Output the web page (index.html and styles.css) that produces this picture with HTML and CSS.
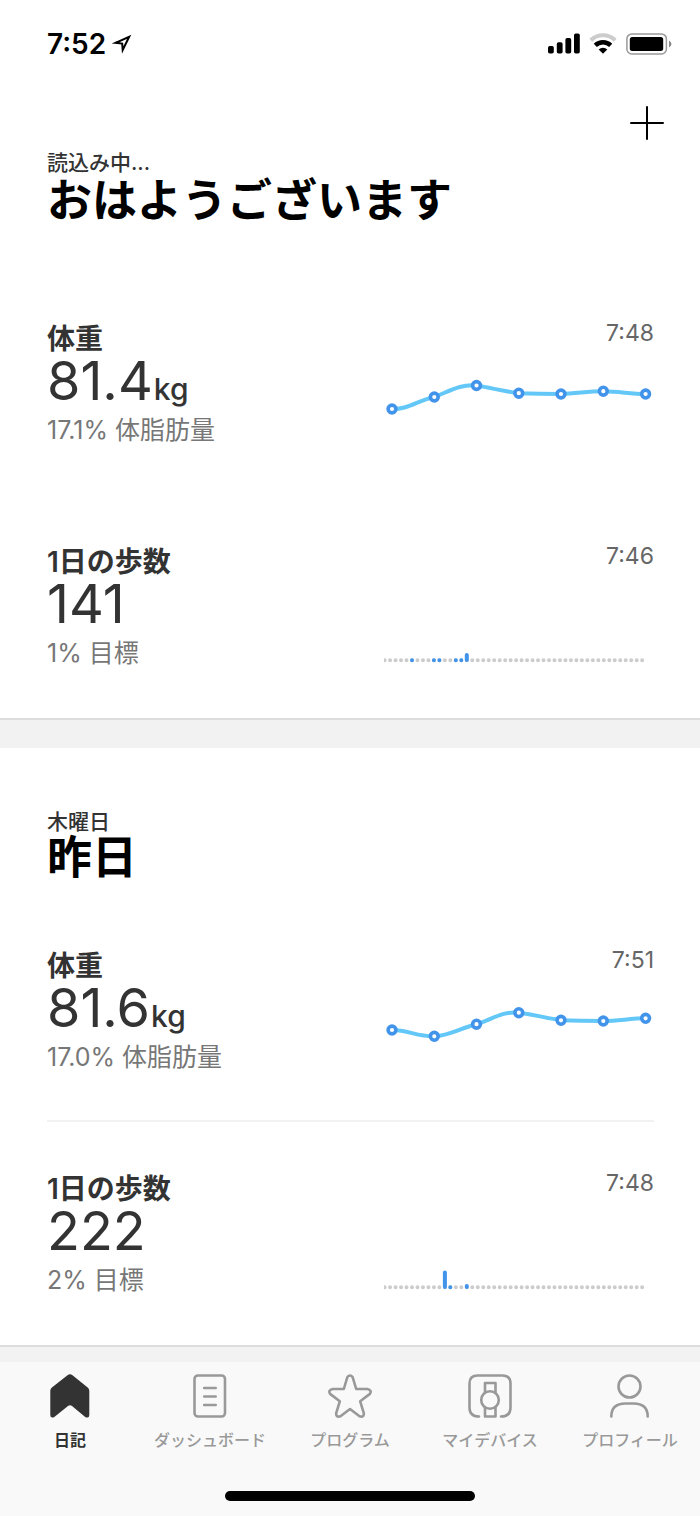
FILE: index.html
```html
<!DOCTYPE html>
<html lang="ja">
<head>
<meta charset="utf-8">
<meta name="viewport" content="width=device-width, initial-scale=1">
<title>日記</title>
<link rel="stylesheet" href="styles.css">
</head>
<body>
<div class="status-bar">
  <span class="clock">7:52</span>
  <svg class="location" width="20" height="20" viewBox="0 0 20 20" aria-hidden="true"><path d="M3.500 8.800 17.200 2.800 10.700 16 10.200 9.600Z" fill="none" stroke="#000" stroke-width="2" stroke-linejoin="miter" stroke-miterlimit="6"/></svg>
  <div class="status-icons">
    <svg width="32" height="22" viewBox="0 0 32 22" aria-hidden="true"><rect x="0" y="13" width="5.800" height="7.500" rx="1.700"/><rect x="8.800" y="9.200" width="5.800" height="11.300" rx="1.700"/><rect x="17.400" y="5" width="5.800" height="15.500" rx="1.700"/><rect x="26" y="0.500" width="5.800" height="20" rx="1.700"/></svg>
    <svg width="28" height="22" viewBox="0 0 28 22" aria-hidden="true"><path d="M1.800 7.300a17.500 17.500 0 0 1 24.400 0" fill="none" stroke="#ccc" stroke-width="4"/><path d="M6.300 12.400a11 11 0 0 1 15.400 0" fill="none" stroke="#000" stroke-width="4.400"/><path d="M14 20.800 9.700 16.500a6 6 0 0 1 8.600 0Z"/></svg>
    <svg width="46" height="22" viewBox="0 0 46 22" aria-hidden="true"><rect x="0.900" y="0.900" width="39.500" height="20" rx="5" fill="none" stroke="#999" stroke-width="1.500"/><rect x="3.800" y="3.900" width="33.400" height="14.200" rx="2.500"/><path d="M43 7.500q5 3.500 0 7Z" fill="#888"/></svg>
  </div>
</div>

<main>
  <section class="day">
    <header class="day-head">
      <button class="add" type="button" aria-label="追加"><svg width="34" height="34" viewBox="0 0 34 34" aria-hidden="true"><path d="M17 1V33M1 17H33" stroke="#000" stroke-width="2" stroke-linecap="round"/></svg></button>
      <p class="eyebrow">読込み中...</p>
      <h1 class="heading">おはようございます</h1>
    </header>
    <article class="entry">
      <div class="summary">
        <h2 class="label">体重</h2>
        <p class="value">81.4<span class="unit">kg</span></p>
        <p class="note">17.1% 体脂肪量</p>
      </div>
      <div class="trend">
        <time class="time">7:48</time>
        <svg class="chart" viewBox="0 0 270 100" role="img" aria-label="体重の推移">
          <path class="curve" d="M8 63C26 63 32 55 50.300 51C66 45 76 38 92.500 39.500C108 42 118 45 134.800 47.200C148 47.700 162 48 177 48C191 48 205 45 219.300 45.200C236 45.400 246 48 261.600 48"/>
          <g class="points"><circle cx="8" cy="63" r="3.900"/><circle cx="50.300" cy="51" r="3.900"/><circle cx="92.500" cy="39.500" r="3.900"/><circle cx="134.800" cy="47.200" r="3.900"/><circle cx="177" cy="48" r="3.900"/><circle cx="219.300" cy="45.200" r="3.900"/><circle cx="261.600" cy="48" r="3.900"/></g>
        </svg>
      </div>
    </article>
    <article class="entry">
      <div class="summary">
        <h2 class="label">1日の歩数</h2>
        <p class="value">141</p>
        <p class="note">1% 目標</p>
      </div>
      <div class="trend">
        <time class="time">7:46</time>
        <svg class="chart" viewBox="0 0 270 100" role="img" aria-label="歩数の推移">
          <path class="rest" d="M0.600 91.200H259"/>
          <path class="steps" d="M28 91.200v0M49.900 91.200v0M55.400 91.200v0M71.800 91.200v0M77.300 91.200v0M82.800 86v5"/>
        </svg>
      </div>
    </article>
  </section>

  <section class="day">
    <header class="day-head day-head-past">
      <p class="eyebrow">木曜日</p>
      <h1 class="heading">昨日</h1>
    </header>
    <article class="entry entry-ruled">
      <div class="summary">
        <h2 class="label">体重</h2>
        <p class="value">81.6<span class="unit">kg</span></p>
        <p class="note">17.0% 体脂肪量</p>
      </div>
      <div class="trend">
        <time class="time">7:51</time>
        <svg class="chart" viewBox="0 0 270 100" role="img" aria-label="体重の推移">
          <path class="curve" d="M8 57C25 57 32 63.500 50.300 63.300C68 62 76 55 92.500 51.200C109 46 118 38 134.800 39.700C150 41.500 162 45 177 47.300C191 47.800 205 48 219.300 48C235 48 246 45.300 261.600 45.300"/>
          <g class="points"><circle cx="8" cy="57" r="3.900"/><circle cx="50.300" cy="63.300" r="3.900"/><circle cx="92.500" cy="51.200" r="3.900"/><circle cx="134.800" cy="39.700" r="3.900"/><circle cx="177" cy="47.300" r="3.900"/><circle cx="219.300" cy="48" r="3.900"/><circle cx="261.600" cy="45.300" r="3.900"/></g>
        </svg>
      </div>
    </article>
    <article class="entry">
      <div class="summary">
        <h2 class="label">1日の歩数</h2>
        <p class="value">222</p>
        <p class="note">2% 目標</p>
      </div>
      <div class="trend">
        <time class="time">7:48</time>
        <svg class="chart" viewBox="0 0 270 100" role="img" aria-label="歩数の推移">
          <path class="rest" d="M0.600 91.200H259"/>
          <path class="steps" d="M60.900 76.500v14.500M66.300 91.200v0M82.800 90v1"/>
        </svg>
      </div>
    </article>
  </section>
</main>

<footer class="dock">
  <nav class="tabs">
    <a class="tab tab-active" href="#diary" aria-current="page">
      <svg width="44" height="44" viewBox="0 0 44 44" aria-hidden="true"><path d="M2.300 16.800Q2.300 14.800 3.900 13.500L19.500 1.200Q22 -0.500 24.500 1.200L39.700 13.500Q41.300 14.800 41.300 16.800V41Q41.300 44.500 37.500 43.200L24 32Q22 30.400 20 32L6 43.200Q2.300 44.500 2.300 41Z" fill="currentColor"/></svg>
      <span>日記</span>
    </a>
    <a class="tab" href="#dashboard">
      <svg width="44" height="44" viewBox="0 0 44 44" aria-hidden="true"><rect x="6.500" y="1.500" width="30.500" height="41" rx="3.500"/><path d="M16.200 14H27.700M16.200 22.500H27.700M16.200 31H27.700"/></svg>
      <span>ダッシュボード</span>
    </a>
    <a class="tab" href="#program">
      <svg width="44" height="44" viewBox="0 0 44 44" aria-hidden="true"><path d="M19.300 3.300Q22-.2 24.700 3.300L28.200 15H39.300Q44.300 16.200 41.900 19.900L32.200 27.300 35.800 39.100Q36.200 43.700 31.500 42.300L22 35 12.500 42.300Q7.800 43.700 8.200 39.100L11.800 27.300 2.100 19.900Q-.3 16.200 4.700 15H15.800Z"/></svg>
      <span>プログラム</span>
    </a>
    <a class="tab" href="#devices">
      <svg width="44" height="44" viewBox="0 0 44 44" aria-hidden="true"><path d="M11 42.500Q1.500 42.500 1.500 33.500V9.500Q1.500 1.500 9.500 1.500H34.500Q42.500 1.500 42.500 9.500V33.500Q42.500 42.500 33 42.500"/><circle cx="22" cy="26" r="8.800"/><path d="M17 18V9H27.500V18M17 34V42.500H27.500V34"/></svg>
      <span>マイデバイス</span>
    </a>
    <a class="tab" href="#profile">
      <svg width="44" height="44" viewBox="0 0 44 44" aria-hidden="true"><circle cx="21.500" cy="12.500" r="11"/><path d="M3.300 42.500C3.300 32.500 9.500 29.500 17.500 29.500H25.500C33.500 29.500 39.700 32.500 39.700 42.500"/></svg>
      <span>プロフィール</span>
    </a>
  </nav>
  <div class="home-indicator"></div>
</footer>
</body>
</html>
```

FILE: styles.css
```css
* {
  box-sizing: border-box;
}

body {
  margin: 0;
  background: #fff;
  color: #333;
  font-family: Inter, "Noto Sans CJK JP", sans-serif;
}

h1, h2, p {
  margin: 0;
}

.status-bar {
  display: flex;
  align-items: center;
  gap: 6px;
  height: 88px;
  padding: 0 28px 0 47px;
  color: #000;
}

.clock {
  font-size: 28px;
  font-weight: 600;
  line-height: 32px;
}

.status-icons {
  display: flex;
  gap: 9px;
  margin-left: auto;
}

.day {
  border-bottom: 2px solid #ddd;
}

.day + .day {
  border-top: 28px solid #f2f2f2;
}

.day-head {
  min-height: 184px;
  padding: 18px 36px 0 47px;
}

.day-head-past {
  min-height: 151px;
  padding-top: 61px;
}

.add {
  display: block;
  width: 34px;
  height: 34px;
  margin: 0 0 10px auto;
  padding: 0;
  border: 0;
  background: none;
}

.eyebrow {
  font-size: 21px;
  font-weight: 500;
  line-height: 26px;
}

.heading {
  color: #000;
  font-size: 45px;
  font-weight: 700;
  line-height: 50px;
}

.day-head-past .heading {
  line-height: 46px;
}

.entry {
  display: flex;
  justify-content: space-between;
  margin: 0 46px 0 47px;
  padding: 50px 0 49px;
}

.entry-ruled {
  padding-bottom: 47px;
  border-bottom: 2px solid #f2f2f2;
}

.label {
  font-size: 28px;
  font-weight: 600;
  line-height: 34px;
}

.value {
  font-size: 54px;
  font-weight: 400;
  line-height: 50px;
}

.unit {
  margin-left: 1px;
  font-size: 30px;
  font-weight: 500;
  line-height: 30px;
}

.note {
  margin-top: 8px;
  color: #777;
  font-size: 25px;
  line-height: 32px;
}

.trend {
  width: 270px;
}

.time {
  display: block;
  margin-bottom: 2px;
  color: #666;
  font-size: 23px;
  line-height: 22px;
  text-align: right;
}

.chart {
  display: block;
  width: 100%;
}

.curve {
  fill: none;
  stroke: #63c8f8;
  stroke-width: 4;
}

.points {
  fill: #fff;
  stroke: #4294eb;
  stroke-width: 3.6;
}

.rest {
  fill: none;
  stroke: #ccc;
  stroke-width: 4;
  stroke-linecap: round;
  stroke-dasharray: 0 5.48;
}

.steps {
  fill: none;
  stroke: #4294eb;
  stroke-width: 4;
  stroke-linecap: round;
}

.dock {
  padding-bottom: 15px;
  border-top: 15px solid #f2f2f2;
  background: #f9f9f9;
}

.tabs {
  display: grid;
  grid-template-columns: repeat(5, 1fr);
  padding-top: 12px;
}

.tab {
  display: flex;
  flex-direction: column;
  align-items: center;
  gap: 12px;
  color: #999;
  font-size: 16px;
  font-weight: 500;
  line-height: 20px;
  text-decoration: none;
  white-space: nowrap;
}

.tab svg {
  fill: none;
  stroke: currentColor;
  stroke-width: 2.6;
  stroke-linecap: round;
  stroke-linejoin: round;
}

.tab-active {
  color: #333;
  font-weight: 600;
}

.tab-active svg {
  stroke: none;
}

.home-indicator {
  width: 250px;
  height: 10px;
  margin: 41px auto 0;
  border-radius: 5px;
  background: #000;
}
```
